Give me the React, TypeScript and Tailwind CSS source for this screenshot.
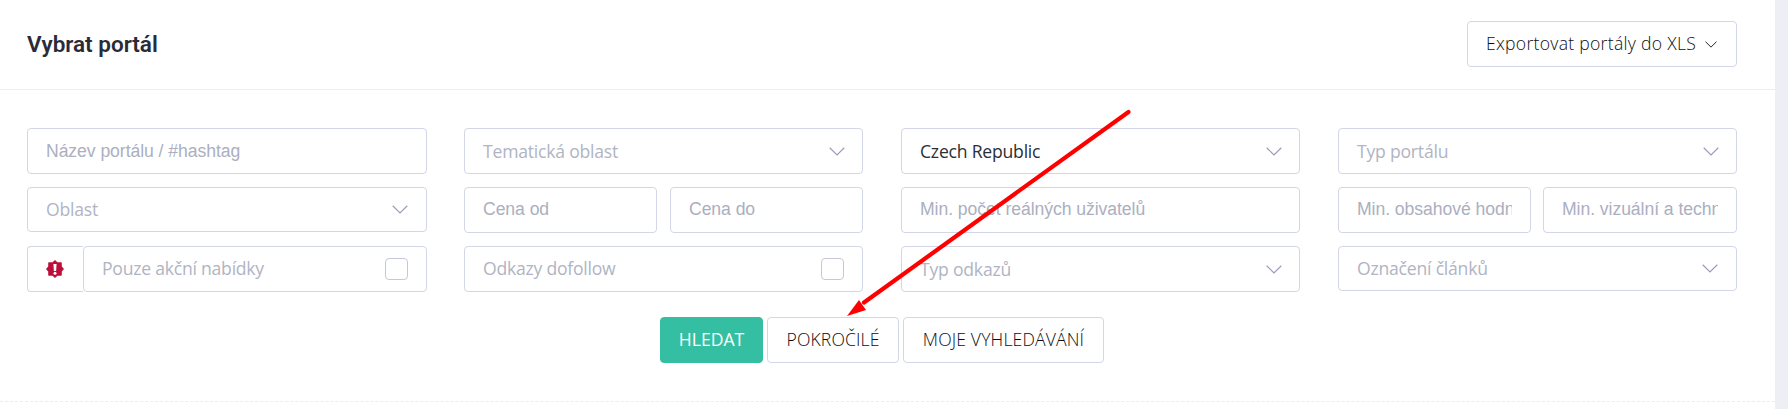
import { ReactNode } from "react";

const BOX = "h-[46px] rounded-[4px] border border-[#d3d6e6] bg-white";

const Chevron = ({ className = "" }: { className?: string }) => (
  <svg viewBox="0 0 16 9" fill="none" stroke="currentColor" className={`h-[9px] w-4 shrink-0 ${className}`}>
    <path d="M0.7 0.8L8 8L15.3 0.8" strokeWidth="1.2" />
  </svg>
);

const SaleIcon = () => (
  <svg viewBox="0 0 18 18" className="mr-px h-[18px] w-[18px]">
    <path
      d="M9 0L11.4 2.2H15.1Q15.8 2.2 15.8 2.9V6.6L18 9L15.8 11.4V15.1Q15.8 15.8 15.1 15.8H11.4L9 18L6.6 15.8H2.9Q2.2 15.8 2.2 15.1V11.4L0 9L2.2 6.6V2.9Q2.2 2.2 2.9 2.2H6.6Z"
      fill="#be0f3a"
    />
    <path d="M7.4 3.9H10.6L10.1 10.9H7.9Z" fill="#fff" />
    <circle cx="9" cy="13.3" r="1.5" fill="#fff" />
  </svg>
);

type SelectProps = { label: string; className?: string; selected?: boolean; chevron?: string };

const Select = ({ label, className = "", selected = false, chevron = "mr-[17px]" }: SelectProps) => (
  <div className={`${BOX} flex w-[399px] items-center justify-between pl-[18px] ${className}`}>
    <span className={`text-[17.6px] tracking-[-0.22px] ${selected ? "text-[#2b2f36]" : "text-[#b0b4c3]"}`}>{label}</span>
    <Chevron className={`text-[#9a9bbd] ${chevron}`} />
  </div>
);

const TextInput = ({ placeholder, className = "" }: { placeholder: string; className?: string }) => (
  <input
    type="text"
    placeholder={placeholder}
    className={`${BOX} block px-[18px] font-['Liberation_Sans',sans-serif] text-[17.6px] tracking-[-0.06px] placeholder:text-[#abafbf] placeholder:opacity-100 ${className}`}
  />
);

const CheckField = ({ label, className = "" }: { label: string; className?: string }) => (
  <div className={`${BOX} flex items-center justify-between pl-[18px] ${className}`}>
    <span className="pb-0.5 text-[17.6px] tracking-[-0.24px] text-[#b0b4c3]">{label}</span>
    <span className="mr-[18px] mb-px h-[22px] w-[23px] rounded-[4px] border border-[#c5c8dc]" />
  </div>
);

const Button = ({ children, className = "" }: { children: ReactNode; className?: string }) => (
  <button className={`h-[46px] rounded-[4px] border text-[17.6px] whitespace-nowrap ${className}`}>{children}</button>
);

const App = () => {
  return (
    <main className="relative flex h-[409px] w-[1788px] overflow-hidden bg-[#eeeef5] font-['Open_Sans',sans-serif]">
      <section className="w-[1775px] bg-white">
        <header className="flex h-[90px] items-center justify-between border-b border-[#ebedf2] pr-[38px] pl-[27px]">
          <h1 className="font-['Roboto',sans-serif] text-[22.5px] font-semibold text-[#2a2b38]">Vybrat portál</h1>
          <Button className="mb-[2px] flex w-[270px] items-center border-[#d3d6e6] pl-[18px] font-light tracking-[0.28px] text-[#0c0e12]">
            Exportovat portály do XLS
            <Chevron className="mt-0.5 ml-[9px] h-[7px]! w-3!" />
          </Button>
        </header>

        <form className="grid grid-cols-[437px_437px_437px_399px] gap-y-[13px] pt-[38px] pl-[27px]">
          <TextInput placeholder="Název portálu / #hashtag" className="w-[400px]" />
          <Select label="Tematická oblast" />
          <Select label="Czech Republic" selected />
          <Select label="Typ portálu" />

          <Select label="Oblast" className="h-[45px]! w-[400px]" chevron="mr-[18px]" />
          <div className="flex w-[399px] justify-between">
            <TextInput placeholder="Cena od" className="w-[193px] pb-[2px]" />
            <TextInput placeholder="Cena do" className="w-[193px] pb-[2px]" />
          </div>
          <TextInput placeholder="Min. počet reálných uživatelů" className="w-[399px] pb-[2px]" />
          <div className="flex w-[399px] justify-between">
            <TextInput placeholder="Min. obsahové hodnocení" className="w-[193px] pb-[2px]" />
            <TextInput placeholder="Min. vizuální a technické hodnocení" className="w-[194px] pb-[2px]" />
          </div>

          <div className="flex w-[400px]">
            <div className={`${BOX} flex w-[56px] items-center justify-center rounded-r-none border-r-0 pb-px`}>
              <SaleIcon />
            </div>
            <CheckField label="Pouze akční nabídky" className="flex-1" />
          </div>
          <CheckField label="Odkazy dofollow" className="w-[399px]" />
          <Select label="Typ odkazů" />
          <Select label="Označení článků" className="h-[45px]!" chevron="mr-[18px]" />
        </form>

        <div className="mt-[25px] flex gap-1 border-b border-dashed border-[#ebedf2] pb-[38px] pl-[660px]">
          <Button className="w-[103px] border-[#34bfa3] bg-[#34bfa3] pb-0.5 text-white">HLEDAT</Button>
          <Button className="w-[132px] border-[#d3d6e6] pb-0.5 font-light tracking-[0.12px] text-[#0c0e12]">POKROČILÉ</Button>
          <Button className="w-[201px] border-[#d3d6e6] pb-0.5 font-light tracking-[0.15px] text-[#0c0e12]">MOJE VYHLEDÁVÁNÍ</Button>
        </div>
      </section>

      {/* arrow pointing at the advanced search button */}
      <svg viewBox="0 0 290 212" className="pointer-events-none absolute top-[108px] left-[844px] h-[212px] w-[290px]">
        <path d="M284.5 4L20 194.5" stroke="#ff0000" strokeWidth="4.2" strokeLinecap="round" />
        <path d="M3 208L15 192L22 202Z" fill="#ff0000" />
      </svg>
    </main>
  );
};

export default App;
